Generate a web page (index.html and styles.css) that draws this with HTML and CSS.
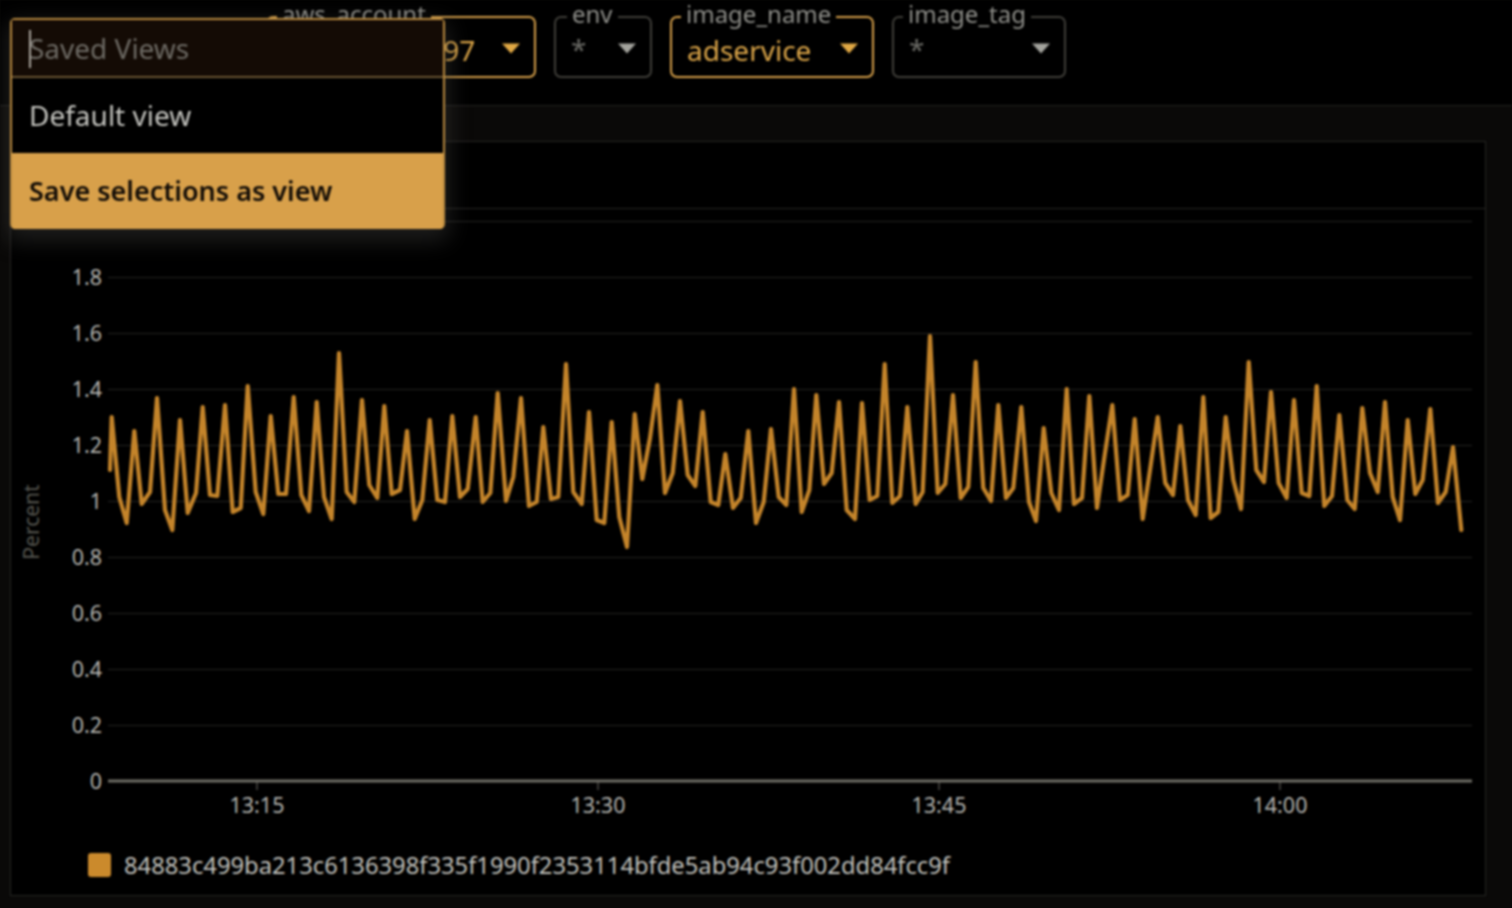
FILE: index.html
```html
<!DOCTYPE html>
<html lang="en">
<head>
<meta charset="utf-8">
<title>Saved Views</title>
<link rel="stylesheet" href="styles.css">
</head>
<body>
<header class="filters">
  <div class="field field-active field-account">
    <span class="field-label">aws_account</span>
    <span class="field-value">338254136297</span>
    <svg class="caret" viewBox="0 0 20 11"><path d="M1 0.5H19L10 10.5Z"/></svg>
  </div>
  <div class="field field-env">
    <span class="field-label">env</span>
    <span class="field-value">*</span>
    <svg class="caret" viewBox="0 0 20 11"><path d="M1 0.5H19L10 10.5Z"/></svg>
  </div>
  <div class="field field-active field-name">
    <span class="field-label">image_name</span>
    <span class="field-value">adservice</span>
    <svg class="caret" viewBox="0 0 20 11"><path d="M1 0.5H19L10 10.5Z"/></svg>
  </div>
  <div class="field field-tag">
    <span class="field-label">image_tag</span>
    <span class="field-value">*</span>
    <svg class="caret" viewBox="0 0 20 11"><path d="M1 0.5H19L10 10.5Z"/></svg>
  </div>
</header>

<div class="views-menu">
  <div class="views-input"><span class="views-cursor"></span>Saved Views</div>
  <div class="views-option">Default view</div>
  <div class="views-option views-option-active">Save selections as view</div>
</div>

<main class="content">
  <section class="panel">
    <div class="panel-head"></div>
    <svg class="chart" viewBox="11 209 1473 627">
      <g class="grid">
        <path d="M108 221.5H1472M108 277.5H1472M108 333.5H1472M108 389.5H1472M108 445.5H1472M108 501.5H1472M108 557.5H1472M108 613.5H1472M108 669.5H1472M108 725.5H1472"/>
      </g>
      <path class="axis" d="M108 781H1472"/>
      <path class="ticks" d="M257 781V790M598 781V790M939 781V790M1280 781V790"/>
      <g class="y-labels">
        <text x="102" y="285">1.8</text>
        <text x="102" y="341">1.6</text>
        <text x="102" y="397">1.4</text>
        <text x="102" y="453">1.2</text>
        <text x="102" y="509">1</text>
        <text x="102" y="565">0.8</text>
        <text x="102" y="621">0.6</text>
        <text x="102" y="677">0.4</text>
        <text x="102" y="733">0.2</text>
        <text x="102" y="789">0</text>
      </g>
      <g class="x-labels">
        <text x="257" y="813">13:15</text>
        <text x="598" y="813">13:30</text>
        <text x="939" y="813">13:45</text>
        <text x="1280" y="813">14:00</text>
      </g>
      <text class="y-title" transform="translate(39 522) rotate(-90)">Percent</text>
      <polyline class="series" points="110,470 111.7,417 119.3,497 126.7,523 134.3,431 141.7,504 150,492 157,398 165,510 172.3,530 180,420 187.7,513 196,493 202.7,407 210,495 217.3,496 225,405 232.7,512 240.7,508 247.7,386 255.7,492 263.3,514 270.7,416 278.3,494 286,494 293.7,397 301.3,495 309,511 316.7,402 324,497 331.7,519 339,353 346.7,492 354.3,502 362,400 369.3,485 377.3,498 384.3,406 391.7,494 400,490 407,431 414.7,519 422.3,500 429.7,420 437.3,500 445,502 452.3,416 460,497 467.7,489 475.7,417 482.7,502 490.3,493 497.7,393 506,501 513.3,477 521,398 529,506 536.7,502 543.3,427 551,499 558.3,497 566,364 573.3,492 581.7,504 589,412 596.7,520 604.3,523 611.7,422 619.3,517 627,547 634.7,414 642.3,479 650,438 657.3,385 665,493 672.7,473 680,401 687.7,475 695.3,486 702.7,412 710.7,502 718.3,505 725.3,454 733,508 740.7,498 748.3,431 756,523 763.7,502 771,429 778.7,497 786.3,505 794,389 801.7,512 809.3,490 816.3,395 824,484 831.7,473 839,402 846.7,510 855,519 862,403 869.7,500 877.3,496 884.7,364 892.3,503 900,496 907.3,407 915.7,504 922.7,492 930,336 937.7,493 945.3,484 953,395 960.7,498 968.3,487 975.7,362 983.3,488 991,501 998.3,405 1006,498 1013.3,488 1021.3,407 1029,502 1036,521 1043.7,428 1051.3,493 1059,510 1066.7,389 1074,504 1082,498 1089.3,396 1097,508 1104.7,455 1112.3,405 1120,500 1127.7,495 1134.7,419 1142.7,519 1150,470 1157.7,417 1165.3,483 1173,495 1180.3,426 1188,500 1195.7,515 1203.3,397 1210.7,518 1218.3,512 1225.7,417 1233.3,480 1241,509 1248.7,362 1256.3,470 1264,482 1271,392 1278.7,483 1286.7,498 1294,400 1301.7,493 1309.3,496 1316.7,386 1324.3,506 1332,496 1339.3,415 1347.3,500 1354.7,509 1362.3,408 1370,473 1377.7,492 1385,402 1392.7,497 1400,520 1407.7,420 1415.3,494 1422.7,480 1430.3,409 1438,503 1445.7,492 1453,447 1461.3,530"/>
    </svg>
    <div class="legend">
      <span class="legend-swatch"></span>
      <span class="legend-text">84883c499ba213c6136398f335f1990f2353114bfde5ab94c93f002dd84fcc9f</span>
    </div>
  </section>
</main>
</body>
</html>
```
FILE: styles.css
```css
* { box-sizing: border-box; }
html, body { margin: 0; height: 100%; }
body {
  width: 1512px;
  height: 908px;
  overflow: hidden;
  position: relative;
  display: flex;
  flex-direction: column;
  background: #0a0908;
  font-family: "Noto Sans", "Open Sans", sans-serif;
  color: #c9c9c4;
  filter: blur(0.8px);
}

.filters {
  height: 106px;
  flex: none;
  display: flex;
  align-items: flex-start;
  gap: 18px;
  padding: 16px 0 0 266px;
  background: #000;
  border-bottom: 1px solid #252422;
}
.field {
  position: relative;
  height: 62px;
  flex: none;
  border: 2px solid #3f3e39;
  border-radius: 7px;
}
.field-account { width: 270px; }
.field-env { width: 98px; }
.field-name { width: 204px; }
.field-tag { width: 174px; }
.field-active { border-color: #d6a04a; }
.field-label {
  position: absolute;
  top: -16px;
  left: 9px;
  padding: 0 5px;
  background: #000;
  font-size: 24px;
  line-height: 24px;
  color: #8f8f8a;
}
.field-env .field-label { left: 11px; }
.field-value {
  position: absolute;
  left: 15px;
  top: 13px;
  font-size: 28px;
  line-height: 36px;
  color: #6c6c67;
}
.field-active .field-value {
  top: 14px;
  color: #dba548;
}
.caret {
  position: absolute;
  right: 13px;
  top: 25px;
  width: 20px;
  height: 11px;
  fill: #a3a39d;
}
.field-active .caret { fill: #e0a844; }

.views-menu {
  position: absolute;
  left: 10px;
  top: 18px;
  width: 435px;
  height: 211px;
  z-index: 2;
  background: #000;
  border: 2px solid #b8893f;
  border-radius: 5px;
  box-shadow: 0 8px 22px 4px rgba(70, 70, 66, 0.42);
  font-size: 28px;
}
.views-input {
  position: relative;
  height: 58px;
  padding-left: 17px;
  display: flex;
  align-items: center;
  background: #140b05;
  border-bottom: 2px solid #6a5532;
  color: #6d6a64;
}
.views-cursor {
  position: absolute;
  left: 17px;
  top: 10px;
  width: 2px;
  height: 38px;
  background: #a9a59e;
}
.views-option {
  height: 75px;
  padding: 0 0 2px 17px;
  display: flex;
  align-items: center;
  color: #c4c4bf;
}
.views-option-active {
  height: 76px;
  background: #d8a04a;
  color: #120c06;
  font-size: 27px;
  font-weight: 600;
  border-radius: 0 0 3px 3px;
}

.content {
  flex: 1;
  min-height: 0;
  padding: 35px 26px 12px 10px;
}
.panel {
  height: 100%;
  display: flex;
  flex-direction: column;
  background: #000;
  border: 1px solid #282725;
}
.panel-head {
  height: 67px;
  flex: none;
  border-bottom: 1px solid #282725;
}
.chart {
  display: block;
  width: 1473px;
  height: 627px;
  flex: none;
}
.grid path { stroke: #242422; stroke-width: 1; fill: none; }
.axis { stroke: #6e6d65; stroke-width: 3; fill: none; }
.ticks { stroke: #6e6d65; stroke-width: 1; fill: none; }
.y-labels text, .x-labels text {
  font-size: 21.5px;
  fill: #b4b4af;
}
.y-labels text { text-anchor: end; }
.x-labels text { text-anchor: middle; }
.y-title {
  font-size: 21px;
  fill: #55554f;
  text-anchor: middle;
}
.series {
  fill: none;
  stroke: #c4842a;
  stroke-width: 4.2;
  stroke-linejoin: round;
  stroke-linecap: round;
}
.legend {
  flex: 1;
  display: flex;
  align-items: center;
  gap: 13px;
  padding: 0 0 2px 77px;
}
.legend-swatch {
  width: 23px;
  height: 24px;
  background: #cb8a2c;
  border-radius: 3px;
}
.legend-text {
  font-size: 23.75px;
  line-height: 30px;
  color: #c2c2bd;
}
```
